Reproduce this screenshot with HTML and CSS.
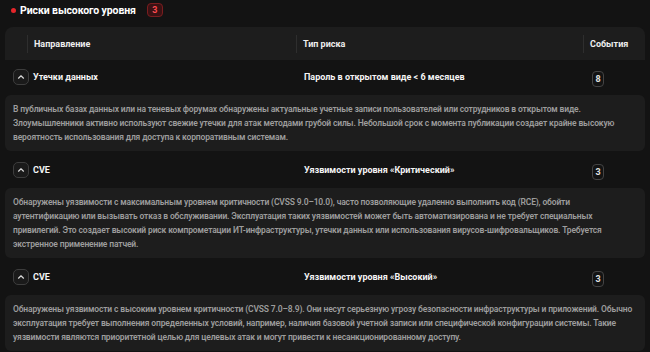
FILE: index.html
```html
<!DOCTYPE html>
<html lang="ru">
<head>
    <meta charset="UTF-8">
    <meta name="viewport" content="width=device-width, initial-scale=1.0">
    <title>Риски высокого уровня</title>
    <link rel="stylesheet" href="styles.css">
</head>
<body>
    <!-- Section title -->
    <div class="risk-title">
        <span class="risk-dot"></span>
        <h2>Риски высокого уровня</h2>
        <span class="risk-badge">3</span>
    </div>

    <div class="risk-table">
        <div class="risk-head">
            <div class="cell"></div>
            <div class="cell sep">Направление</div>
            <div class="cell sep">Тип риска</div>
            <div class="cell sep">События</div>
        </div>

        <div class="risk-item">
            <div class="risk-row">
                <div class="cell"><button class="toggle"><svg viewBox="0 0 10 10"><path d="M2.5 6.2 5 3.8l2.5 2.4"/></svg></button></div>
                <div class="cell name">Утечки данных</div>
                <div class="cell name">Пароль в открытом виде &lt; 6 месяцев</div>
                <div class="cell"><span class="count">8</span></div>
            </div>
            <div class="risk-desc">В публичных базах данных или на теневых форумах обнаружены актуальные учетные записи пользователей или сотрудников в открытом виде. Злоумышленники активно используют свежие утечки для атак методами грубой силы. Небольшой срок с момента публикации создает крайне высокую вероятность использования для доступа к корпоративным системам.</div>
        </div>

        <div class="risk-item">
            <div class="risk-row">
                <div class="cell"><button class="toggle"><svg viewBox="0 0 10 10"><path d="M2.5 6.2 5 3.8l2.5 2.4"/></svg></button></div>
                <div class="cell name">CVE</div>
                <div class="cell name">Уязвимости уровня «Критический»</div>
                <div class="cell"><span class="count">3</span></div>
            </div>
            <div class="risk-desc">Обнаружены уязвимости с максимальным уровнем критичности (CVSS 9.0–10.0), часто позволяющие удаленно выполнить код (RCE), обойти аутентификацию или вызывать отказ в обслуживании. Эксплуатация таких уязвимостей может быть автоматизирована и не требует специальных привилегий. Это создает высокий риск компрометации ИТ-инфраструктуры, утечки данных или использования вирусов-шифровальщиков. Требуется экстренное применение патчей.</div>
        </div>

        <div class="risk-item">
            <div class="risk-row">
                <div class="cell"><button class="toggle"><svg viewBox="0 0 10 10"><path d="M2.5 6.2 5 3.8l2.5 2.4"/></svg></button></div>
                <div class="cell name">CVE</div>
                <div class="cell name">Уязвимости уровня «Высокий»</div>
                <div class="cell"><span class="count">3</span></div>
            </div>
            <div class="risk-desc">Обнаружены уязвимости с высоким уровнем критичности (CVSS 7.0–8.9). Они несут серьезную угрозу безопасности инфраструктуры и приложений. Обычно эксплуатация требует выполнения определенных условий, например, наличия базовой учетной записи или специфической конфигурации системы. Такие уязвимости являются приоритетной целью для целевых атак и могут привести к несанкционированному доступу.</div>
        </div>
    </div>
</body>
</html>
```

FILE: styles.css
```css
body {
    margin: 0;
    background: #131313;
    color: #f2f2f2;
    font-family: Roboto, "Noto Sans", sans-serif;
}

/* Title */
.risk-title {
    display: flex;
    align-items: center;
    gap: 4px;
    height: 20px;
    padding: 0 11px;
}

.risk-title h2 {
    margin: 0;
    font-size: 10.5px;
    font-weight: 700;
    letter-spacing: -0.1px;
    color: #ffffff;
}

.risk-dot {
    width: 5px;
    height: 5px;
    border-radius: 50%;
    background: #e5252a;
}

.risk-badge {
    margin-left: 7px;
    width: 14px;
    height: 12px;
    border: 1px solid #7a1d1f;
    border-radius: 4px;
    background: #3a1214;
    color: #ff4a4f;
    font-size: 9px;
    font-weight: 700;
    display: flex;
    align-items: center;
    justify-content: center;
}

/* Table */
.risk-table {
    margin: 7px 5px 0 5px;
}

.risk-head,
.risk-row {
    display: grid;
    grid-template-columns: 22px 269px 287px 1fr;
    align-items: center;
}

.risk-head {
    height: 33px;
    background: #1d1d1d;
    border-radius: 8px 8px 0 0;
    font-size: 9px;
    font-weight: 700;
    color: #eeeeee;
}

.cell {
    padding: 0 6px;
}

.risk-head .cell:first-child,
.risk-row .cell:first-child {
    padding: 0 0 0 8px;
}

.risk-row .cell:nth-child(2) {
    padding-left: 6px;
}

.risk-row .cell:nth-child(3) {
    padding-left: 8px;
}

.sep {
    border-left: 1px solid #2e2e2e;
    line-height: 18px;
}

.risk-row {
    height: 33px;
}

.name {
    font-size: 9px;
    font-weight: 700;
    color: #f5f5f5;
}

.toggle {
    width: 16px;
    height: 16px;
    padding: 0;
    border: 1px solid #3d3d3d;
    border-radius: 5px;
    background: #1a1a1a;
    display: flex;
    align-items: center;
    justify-content: center;
}

.toggle svg {
    width: 10px;
    height: 10px;
    fill: none;
    stroke: #d8d8d8;
    stroke-width: 1.2;
    stroke-linecap: round;
    stroke-linejoin: round;
}

.count {
    display: inline-flex;
    align-items: center;
    justify-content: center;
    width: 10px;
    height: 14px;
    margin-left: 3px;
    border: 1px solid #444;
    border-radius: 4px;
    font-size: 9px;
    font-weight: 700;
    color: #e0e0e0;
}

.risk-desc {
    margin: 2px 0;
    padding: 7px 8px;
    background: #1d1d1d;
    border-radius: 6px;
    font-size: 8.5px;
    font-weight: 600;
    letter-spacing: -0.15px;
    line-height: 14px;
    color: #9c9c9c;
}
```
